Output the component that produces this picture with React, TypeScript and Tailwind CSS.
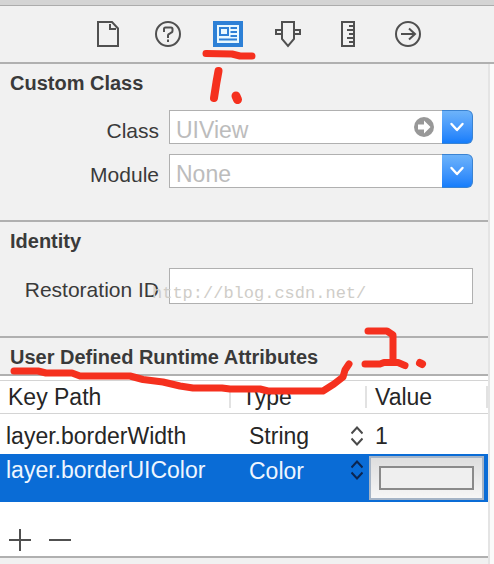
import React from 'react';

interface Attribute {
  keyPath: string;
  type: string;
  value?: string;
  selected?: boolean;
}

const attributes: Attribute[] = [
  { keyPath: 'layer.borderWidth', type: 'String', value: '1' },
  { keyPath: 'layer.borderUIColor', type: 'Color', selected: true }
];

const tabs = [
  {
    name: 'File inspector',
    icon: (
      <>
        <path d="M6 3h14l6 6.500V27H6z" />
        <path d="M18 5v5h6" />
      </>
    )
  },
  {
    name: 'Quick help',
    icon: (
      <>
        <circle cx="16" cy="15" r="12" />
        <path d="M12 13v-3q0-1.500 1.500-1.500h5.500q1.500 0 1.500 1.500v2q0 1-1 1.500L17 15q-1 .5-1 1.500V19M16 20.500v2.500" />
      </>
    )
  },
  {
    name: 'Identity inspector',
    icon: (
      <>
        <path d="M1 2h30v26H1z" fill="#2d80d6" stroke="none" />
        <path d="M5 6h22v18H5z" fill="#e8f8ff" stroke="none" />
        <path d="M8 9h8v7H8zM18.500 9H25M18.500 13H25M18.500 17H25M7 20.500h18" stroke="#2d80d6" />
      </>
    )
  },
  {
    name: 'Attributes inspector',
    icon: (
      <>
        <path d="M10 3h12v17l-6 7-6-7z" />
        <path d="M10 11H4v4h6M22 11h6v4h-6" />
      </>
    )
  },
  {
    name: 'Size inspector',
    icon: (
      <>
        <path d="M10 3h12v24H10z" />
        <path d="M17 7h5M15 11h7M17 15h5M15 19h7M17 23h5" />
      </>
    )
  },
  {
    name: 'Connections inspector',
    icon: (
      <>
        <circle cx="16" cy="15" r="12" />
        <path d="M9 15h14M17 9.500l6 5.500-6 5.500" />
      </>
    )
  }
];

function DropButton({ label }: { label: string }) {
  return (
    <button
      type="button"
      aria-label={label}
      className="flex w-[31px] shrink-0 items-center justify-center rounded-r-md border-y border-r border-[#3a83d2] bg-linear-to-b from-[#6db3fa] to-[#147dfb]"
    >
      <svg width="16" height="12" viewBox="0 0 16 12" fill="none" stroke="white" strokeWidth="2.4" strokeLinecap="round" strokeLinejoin="round">
        <path d="M2.500 3L8 9l5.500-6" />
      </svg>
    </button>
  );
}

function SectionTitle({ children }: { children: React.ReactNode }) {
  return <h2 className="pt-1 pl-2.5 text-[20px] leading-[30px] font-bold text-[#3a3a3a]">{children}</h2>;
}

function FieldRow({ id, label, children }: { id: string; label: string; children: React.ReactNode }) {
  return (
    <div className="flex items-center gap-2.5 pr-[15px]">
      <label htmlFor={id} className="w-[159px] shrink-0 pt-2 text-right text-[21px] leading-6 text-[#3a3a3a]">
        {label}
      </label>
      {children}
    </div>
  );
}

function Combo({ id, placeholder, jump }: { id: string; placeholder: string; jump?: boolean }) {
  return (
    <div className="flex h-[34px] min-w-0 flex-1">
      <div className="flex min-w-0 flex-1 items-center border-y border-l border-[#b0b0b0] bg-white pl-1.5">
        <input
          id={id}
          placeholder={placeholder}
          className="h-full min-w-0 flex-1 pt-1.5 text-[23px] outline-none placeholder:text-[#bcbcbc]"
        />
        {jump && (
          <button type="button" aria-label="Show class" className="mr-2 shrink-0">
            <svg width="20" height="20" viewBox="0 0 20 20">
              <circle cx="10" cy="10" r="10" fill="#989898" />
              <path d="M4 7.500h6V3.500l6.500 6.500-6.500 6.500v-4H4z" fill="white" />
            </svg>
          </button>
        )}
      </div>
      <DropButton label={`Choose ${id}`} />
    </div>
  );
}

function AttributeRow({ keyPath, type, value, selected }: Attribute) {
  return (
    <tr className={selected ? 'h-12 bg-[#0a6cd6] align-top text-[#eef6ff]' : 'h-10 align-top text-[#262626]'}>
      <td className={selected ? 'pl-1.5 leading-8' : 'pt-1 pl-1.5 leading-9'}>{keyPath}</td>
      <td className={selected ? '' : 'pt-1'}>
        <div className={selected ? 'relative h-8' : 'relative h-9'}>
          <select
            aria-label={`Type of ${keyPath}`}
            defaultValue={type}
            className="h-full w-full appearance-none bg-transparent pl-[18px] outline-none"
          >
            <option>String</option>
            <option>Color</option>
          </select>
          <svg
            className="pointer-events-none absolute inset-y-0 right-1 my-auto"
            width="12"
            height="20"
            viewBox="0 0 12 20"
            fill="none"
            stroke={selected ? '#0b2550' : '#4a4a4a'}
            strokeWidth="2"
          >
            <path d="M.5 7.500L6 1.500l5.500 6M.5 12.500l5.500 6 5.500-6" />
          </svg>
        </div>
      </td>
      <td className={selected ? 'py-0.5 pr-1 pl-0.5' : 'pt-1 pl-2'}>
        {selected ? (
          <button
            type="button"
            aria-label="Pick color"
            className="block h-11 w-full border-2 border-[#a5b4c6] bg-linear-to-b from-[#dedede] to-[#f6f6f6] px-2 py-2"
          >
            <span className="block h-full border-2 border-[#8a8a8a] bg-[#efefef]" />
          </button>
        ) : (
          <input aria-label={`Value of ${keyPath}`} defaultValue={value} className="h-9 w-full outline-none" />
        )}
      </td>
    </tr>
  );
}

function Marks() {
  return (
    <svg
      className="pointer-events-none absolute top-0 left-0"
      width="494"
      height="564"
      viewBox="0 0 494 564"
      fill="none"
      stroke="#f5301e"
      strokeWidth="7"
      strokeLinecap="round"
      strokeLinejoin="round"
      aria-hidden="true"
    >
      <path d="M206 53.500L232 54L240 56H252" />
      <path d="M218.500 71L216.500 82L214 98" strokeWidth="8" />
      <path d="M236 96L237.500 99.500" strokeWidth="9" />
      <path d="M14 371H38L46 373H72L80 376H130L143 379.500L163 382L180 386L193 388H222L230 389H260L268 391H323L334 384L343 377L345 370L349 364" />
      <path d="M368 331H387L393 335V362M365 364H380L384 362.500H398L405 365.500" />
      <path d="M420 363L422 364" strokeWidth="8" />
    </svg>
  );
}

function App() {
  return (
    <div className="relative flex min-h-screen flex-col bg-[#fafafa] font-['Liberation_Sans',Arial,sans-serif]">
      <div className="h-1.5 border-b border-[#acacac] bg-[#d4d4d4]" />
      <nav aria-label="Inspectors" className="flex h-[58px] justify-center border-b-2 border-[#b0b0b0] bg-[#f1f1f1] pl-[22px]">
        {tabs.map((tab) => (
          <button key={tab.name} type="button" aria-label={tab.name} className="flex w-[60px] items-center justify-center">
            <svg width="32" height="30" viewBox="0 0 32 30" fill="none" stroke="#505050" strokeWidth="2">
              {tab.icon}
            </svg>
          </button>
        ))}
      </nav>

      <main className="mr-1 flex-1 border-r-2 border-[#e4e4e4] bg-[#f1f1f1]">
        <section className="border-b-2 border-[#b0b0b0] pb-8">
          <SectionTitle>Custom Class</SectionTitle>
          <div className="mt-3 flex flex-col gap-2.5">
            <FieldRow id="class" label="Class">
              <Combo id="class" placeholder="UIView" jump />
            </FieldRow>
            <FieldRow id="module" label="Module">
              <Combo id="module" placeholder="None" />
            </FieldRow>
          </div>
        </section>

        <section className="border-b-2 border-[#b0b0b0] pb-8">
          <SectionTitle>Identity</SectionTitle>
          <div className="relative mt-3">
            <FieldRow id="restoration" label="Restoration ID">
              <input id="restoration" className="h-9 min-w-0 flex-1 border border-[#b0b0b0] bg-white px-1.5 text-[23px] outline-none" />
            </FieldRow>
            <span className="pointer-events-none absolute top-3.5 left-[152px] font-['Liberation_Mono',monospace] text-[17px] leading-6 text-[#cfcdc8]">
              http://blog.csdn.net/
            </span>
          </div>
        </section>

        <section className="border-b-2 border-[#b0b0b0]">
          <div className="border-b-2 border-[#b0b0b0] pb-0.5">
            <SectionTitle>User Defined Runtime Attributes</SectionTitle>
          </div>
          <div className="bg-white pt-1">
            <table className="w-full table-fixed text-[23px]">
              <colgroup>
                <col />
                <col className="w-[136px]" />
                <col className="w-[121px]" />
              </colgroup>
              <thead>
                <tr className="h-[33px] border-y border-[#d4d4d4] text-left text-[#262626]">
                  <th className="font-normal">
                    <div className="border-r-2 border-[#e2e2e2] pl-2 leading-[22px]">Key Path</div>
                  </th>
                  <th className="font-normal">
                    <div className="border-r-2 border-[#e2e2e2] pl-[11px] leading-[22px]">Type</div>
                  </th>
                  <th className="font-normal">
                    <div className="border-r-2 border-[#e2e2e2] pl-2 leading-[22px]">Value</div>
                  </th>
                </tr>
              </thead>
              <tbody>
                {attributes.map((attribute) => (
                  <AttributeRow key={attribute.keyPath} {...attribute} />
                ))}
              </tbody>
            </table>
            <div className="flex h-[54px] items-end gap-[18px] pb-[5px] pl-[9px]">
              <button type="button" aria-label="Add attribute">
                <svg width="22" height="22" viewBox="0 0 22 22" stroke="#505050" strokeWidth="2">
                  <path d="M0 11h22M11 0v22" />
                </svg>
              </button>
              <button type="button" aria-label="Remove attribute">
                <svg width="22" height="22" viewBox="0 0 22 22" stroke="#505050" strokeWidth="2">
                  <path d="M0 11h22" />
                </svg>
              </button>
            </div>
          </div>
        </section>
      </main>

      <Marks />
    </div>
  );
}

export default App;
